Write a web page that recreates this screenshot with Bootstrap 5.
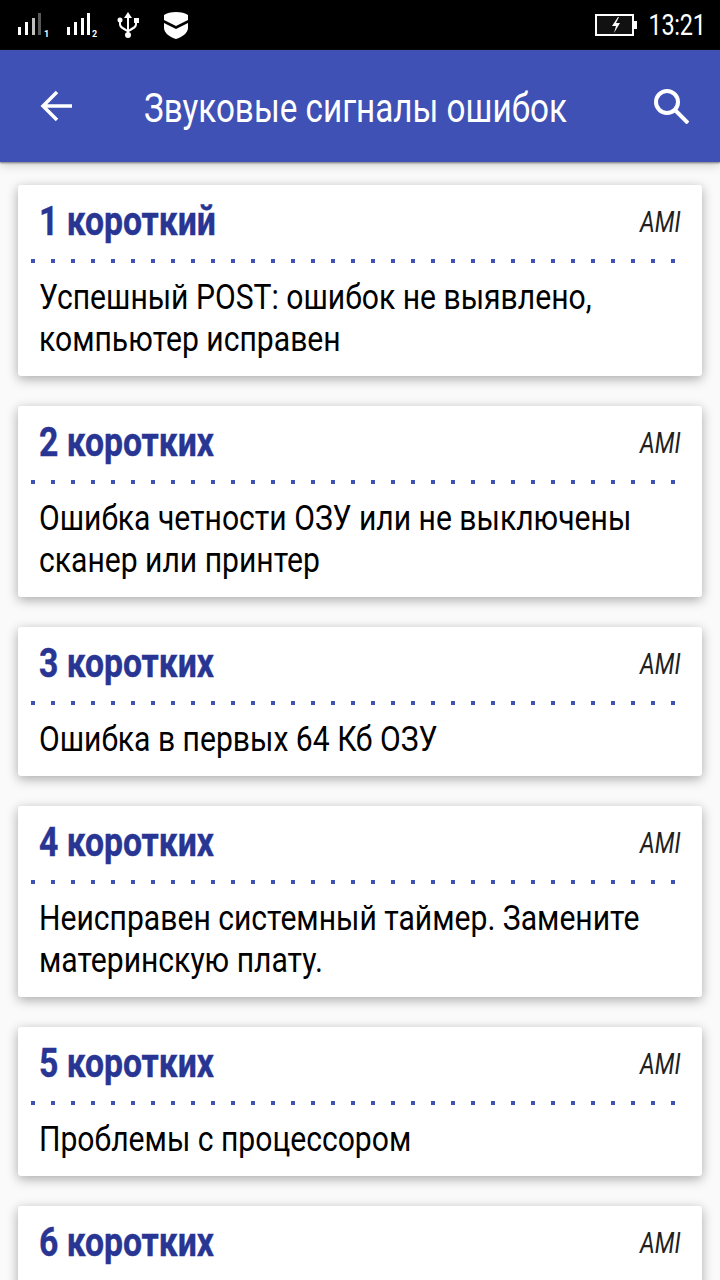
<!DOCTYPE html>
<html lang="ru">
<head>
  <meta charset="UTF-8" />
  <meta name="viewport" content="width=device-width, initial-scale=1.0" />
  <title>Звуковые сигналы ошибок</title>
  <link rel="stylesheet" href="https://cdn.jsdelivr.net/npm/bootstrap@5.3.0/dist/css/bootstrap.min.css" />
  <style>
    /* Roboto Condensed is not installed, so Roboto is narrowed with scaleX */
    html, body { height: 1280px; overflow: hidden; }
    body { background: #fafafa; font-family: Roboto, sans-serif; }
    .status-bar { height: 50px; background: #000; color: #fff; padding-right: 14px; }
    .status-time { font-size: 29px; line-height: 1; margin-left: -4px; transform: scaleX(.81); transform-origin: right center; letter-spacing: -.3px; }
    .app-bar { height: 112px; background: #3f51b5; color: #fff; box-shadow: 0 1px 2px #777, 0 3px 10px rgba(0,0,0,.18); padding: 0 31px 0 40px; }
    .app-title { font-size: 40px; line-height: 1; margin: 6px 0 0 72px; font-weight: 400; white-space: nowrap; transform: scaleX(.831); transform-origin: left center; }
    .beep-list { padding: 23px 18px 0; gap: 30px; }
    .beep-card { background: #fff; border-radius: 3px; box-shadow: 0 3px 12px rgba(0,0,0,.33); padding: 0 21px 15px 21px; }
    .beep-head { height: 74px; }
    .beep-name { color: #283593; font-size: 40px; font-weight: 700; line-height: 1; margin: 0; transform: scaleX(.843); transform-origin: left center; -webkit-text-stroke: .4px #283593; }
    .beep-type { color: #212121; font-size: 29px; line-height: 1; font-style: italic; transform: scaleX(.8); transform-origin: right center; }
    .beep-dots { height: 4px; margin-left: -8px; margin-right: 6px; background: repeating-linear-gradient(90deg, #3f51b5 0 4px, transparent 4px 20px); }
    .beep-text { color: #000; font-size: 35px; line-height: 42px; margin: 14px 0 0; width: 745px; transform: scaleX(.86); transform-origin: left center; }
  </style>
</head>
<body>
  <div class="status-bar d-flex align-items-center">
    <svg width="200" height="50" viewBox="0 0 200 50" fill="#fff">
      <rect x="18" y="27" width="3" height="8" /><rect x="25" y="22" width="3" height="13" />
      <rect x="32" y="18" width="3" height="17" opacity=".75" /><rect x="38" y="13" width="3" height="22" opacity=".35" />
      <text x="44" y="37" font-family="Roboto, sans-serif" font-size="9" font-weight="700">1</text>
      <rect x="67" y="27" width="3" height="8" /><rect x="74" y="22" width="3" height="13" />
      <rect x="81" y="18" width="3" height="17" /><rect x="87" y="13" width="3" height="22" />
      <text x="92" y="37" font-family="Roboto, sans-serif" font-size="9" font-weight="700">2</text>
      <path d="M128 12l4 6h-3v17h-2V18h-3z" />
      <circle cx="128" cy="35" r="3" />
      <circle cx="120" cy="20" r="2.500" />
      <rect x="134" y="18" width="5" height="5" />
      <path d="M119 21h2v3c0 2 2 3 7 6v2.500c-6-3.500-9-4.500-9-8.500z M135 22h2v2c0 4-3 5-9 8.500V30c5-3 7-4 7-6z" />
      <path d="M164 15c5-4 19-4 24 0v5l-12 6-12-6z" />
      <path d="M164 23l12 6 12-6v5c0 5-6 9-12 11-6-2-12-6-12-11z" />
    </svg>
    <div class="ms-auto d-flex align-items-center">
      <svg width="44" height="24" viewBox="0 0 44 24">
        <rect x="1" y="2" width="37" height="20" fill="#111" stroke="#fff" stroke-width="2" />
        <rect x="39" y="8" width="3" height="8" fill="#fff" />
        <path d="M23 4l-6 9h4l-2 7 6-10h-4l3-6z" fill="#fff" />
      </svg>
      <span class="status-time">13:21</span>
    </div>
  </div>

  <header class="app-bar d-flex align-items-center position-relative">
    <svg width="32" height="32" viewBox="0 0 32 32" fill="none" stroke="#fff" stroke-width="3.500">
      <path d="M32 16H3M17 2L3 16l14 14" />
    </svg>
    <h1 class="app-title">Звуковые сигналы ошибок</h1>
    <svg class="ms-auto" width="36" height="36" viewBox="0 0 36 36" fill="none" stroke="#fff" stroke-width="4">
      <circle cx="14" cy="14" r="11" /><path d="M22 22l13 13" />
    </svg>
  </header>

  <main class="beep-list d-flex flex-column">
    <section class="beep-card">
      <div class="beep-head d-flex justify-content-between align-items-center">
        <h2 class="beep-name">1 короткий</h2><span class="beep-type">AMI</span>
      </div>
      <div class="beep-dots"></div>
      <p class="beep-text">Успешный POST: ошибок не выявлено, компьютер исправен</p>
    </section>
    <section class="beep-card">
      <div class="beep-head d-flex justify-content-between align-items-center">
        <h2 class="beep-name">2 коротких</h2><span class="beep-type">AMI</span>
      </div>
      <div class="beep-dots"></div>
      <p class="beep-text">Ошибка четности ОЗУ или не выключены сканер или принтер</p>
    </section>
    <section class="beep-card">
      <div class="beep-head d-flex justify-content-between align-items-center">
        <h2 class="beep-name">3 коротких</h2><span class="beep-type">AMI</span>
      </div>
      <div class="beep-dots"></div>
      <p class="beep-text">Ошибка в первых 64 Кб ОЗУ</p>
    </section>
    <section class="beep-card">
      <div class="beep-head d-flex justify-content-between align-items-center">
        <h2 class="beep-name">4 коротких</h2><span class="beep-type">AMI</span>
      </div>
      <div class="beep-dots"></div>
      <p class="beep-text">Неисправен системный таймер. Замените материнскую плату.</p>
    </section>
    <section class="beep-card">
      <div class="beep-head d-flex justify-content-between align-items-center">
        <h2 class="beep-name">5 коротких</h2><span class="beep-type">AMI</span>
      </div>
      <div class="beep-dots"></div>
      <p class="beep-text">Проблемы с процессором</p>
    </section>
    <section class="beep-card">
      <div class="beep-head d-flex justify-content-between align-items-center">
        <h2 class="beep-name">6 коротких</h2><span class="beep-type">AMI</span>
      </div>
    </section>
  </main>

  <script src="https://cdn.jsdelivr.net/npm/bootstrap@5.3.0/dist/js/bootstrap.bundle.min.js"></script>
</body>
</html>
